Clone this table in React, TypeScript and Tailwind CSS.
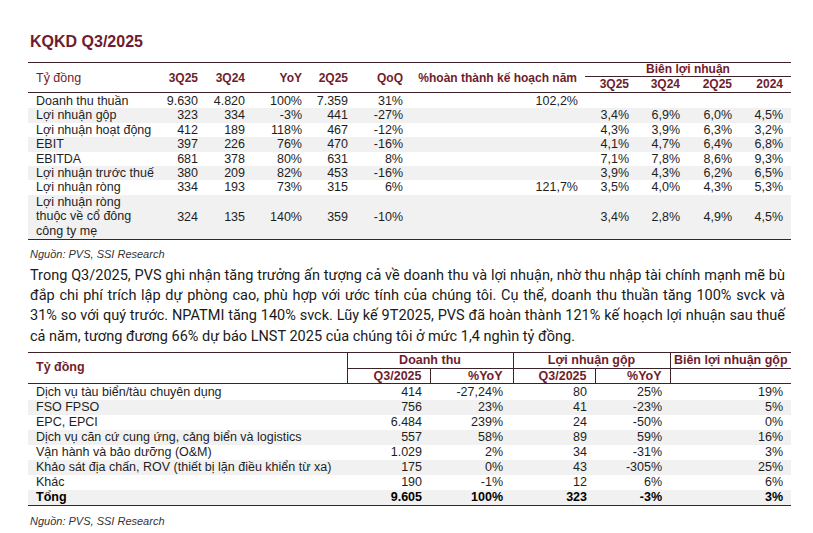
import React from "react";

const RED = "text-[#6f1d2d]";

const rows1 = [
  ["Doanh thu thuần", "9.630", "4.820", "100%", "7.359", "31%", "102,2%", "", "", "", ""],
  ["Lợi nhuận gộp", "323", "334", "-3%", "441", "-27%", "", "3,4%", "6,9%", "6,0%", "4,5%"],
  ["Lợi nhuận hoạt động", "412", "189", "118%", "467", "-12%", "", "4,3%", "3,9%", "6,3%", "3,2%"],
  ["EBIT", "397", "226", "76%", "470", "-16%", "", "4,1%", "4,7%", "6,4%", "6,8%"],
  ["EBITDA", "681", "378", "80%", "631", "8%", "", "7,1%", "7,8%", "8,6%", "9,3%"],
  ["Lợi nhuận trước thuế", "380", "209", "82%", "453", "-16%", "", "3,9%", "4,3%", "6,2%", "6,5%"],
  ["Lợi nhuận ròng", "334", "193", "73%", "315", "6%", "121,7%", "3,5%", "4,0%", "4,3%", "5,3%"],
];

const rows2 = [
  ["Dịch vụ tàu biển/tàu chuyên dụng", "414", "-27,24%", "80", "25%", "19%"],
  ["FSO FPSO", "756", "23%", "41", "-23%", "5%"],
  ["EPC, EPCI", "6.484", "239%", "24", "-50%", "0%"],
  ["Dịch vụ căn cứ cung ứng, cảng biển và logistics", "557", "58%", "89", "59%", "16%"],
  ["Vận hành và bảo dưỡng (O&M)", "1.029", "2%", "34", "-31%", "3%"],
  ["Khảo sát địa chấn, ROV (thiết bị lặn điều khiển từ xa)", "175", "0%", "43", "-305%", "25%"],
  ["Khác", "190", "-1%", "12", "6%", "6%"],
];

const paraLines = [
  "Trong Q3/2025, PVS ghi nhận tăng trưởng ấn tượng cả về doanh thu và lợi nhuận, nhờ thu nhập tài chính mạnh mẽ bù",
  "đắp chi phí trích lập dự phòng cao, phù hợp với ước tính của chúng tôi. Cụ thể, doanh thu thuần tăng 100% svck và",
  "31% so với quý trước. NPATMI tăng 140% svck. Lũy kế 9T2025, PVS đã hoàn thành 121% kế hoạch lợi nhuận sau thuế",
  "cả năm, tương đương 66% dự báo LNST 2025 của chúng tôi ở mức 1,4 nghìn tỷ đồng.",
];

const widths1 = [122, 48, 47, 57, 46, 55, 175, 51, 51, 52, 59];
const widths2 = [319, 83, 83, 82, 75, 121];

export default function App() {
  return (
    <div
      className="w-[813px] h-[533px] bg-white overflow-hidden px-[28px] pt-[32px] text-[#1e1e1e]"
      style={{ fontFamily: '"Liberation Sans", Arial, sans-serif' }}
    >
      <h1 className={`text-[16px] leading-[20px] font-bold ${RED} pl-[2px]`}>KQKD Q3/2025</h1>

      <table className="mt-[10px] w-[763px] table-fixed border-collapse text-[12.5px]">
        <colgroup>
          {widths1.map((w, i) => (
            <col key={i} style={{ width: w }} />
          ))}
        </colgroup>
        <thead className={`${RED} text-[12px]`}>
          <tr className="border-t border-[#3d2228] h-[14px]">
            <th rowSpan={2} className="text-left font-normal pl-[8px] text-[12.5px] leading-[14px]">Tỷ đồng</th>
            <th rowSpan={2} className="text-right font-bold leading-[14px]">3Q25</th>
            <th rowSpan={2} className="text-right font-bold leading-[14px]">3Q24</th>
            <th rowSpan={2} className="text-right font-bold leading-[14px]">YoY</th>
            <th rowSpan={2} className="text-right font-bold leading-[14px]">2Q25</th>
            <th rowSpan={2} className="text-right font-bold leading-[14px]">QoQ</th>
            <th rowSpan={2} className="text-right font-bold pr-[1px] leading-[14px]">%hoàn thành kế hoạch năm</th>
            <th colSpan={4} className="font-bold p-0 align-bottom">
              <div className="ml-[7px] border-b border-[#3d2228] text-center leading-[13px]">Biên lợi nhuận</div>
            </th>
          </tr>
          <tr className="border-b border-[#3d2228] h-[15px]">
            <th className="text-right font-bold leading-[15px]">3Q25</th>
            <th className="text-right font-bold leading-[15px]">3Q24</th>
            <th className="text-right font-bold leading-[15px]">2Q25</th>
            <th className="text-right font-bold leading-[15px] pr-[8px]">2024</th>
          </tr>
        </thead>
        <tbody className="leading-[14.4px]">
          {rows1.map((r, i) => (
            <tr key={i} className={i % 2 === 1 ? "bg-[#f1f1f1]" : ""}>
              {r.map((c, j) => (
                <td
                  key={j}
                  className={`${j === 0 ? "text-left pl-[8px] whitespace-nowrap" : "text-right"} ${j === 10 ? "pr-[8px]" : ""} ${i === 0 ? "pt-[1px]" : ""}`}
                >
                  {c}
                </td>
              ))}
            </tr>
          ))}
          <tr className="bg-[#f1f1f1] border-b border-[#3d2228]">
            <td className="text-left pl-[8px] leading-[14.6px]">
              Lợi nhuận ròng
              <br />
              thuộc về cổ đông
              <br />
              công ty mẹ
            </td>
            {["324", "135", "140%", "359", "-10%", "", "3,4%", "2,8%", "4,9%", "4,5%"].map((c, j) => (
              <td key={j} className={`text-right ${j === 9 ? "pr-[8px]" : ""}`}>
                {c}
              </td>
            ))}
          </tr>
        </tbody>
      </table>

      <p className="mt-[7px] pl-[2px] text-[11px] leading-[14px] italic text-[#333]">Nguồn: PVS, SSI Research</p>

      <div
        className="mt-[5px] text-[14.5px] leading-[20.3px] text-[#1a1a1a] pl-[2px]"
        style={{ fontFamily: 'Roboto, "Liberation Sans", sans-serif' }}
      >
        {paraLines.map((l, i) => (
          <div
            key={i}
            className={i < 3 ? "text-justify [text-align-last:justify] whitespace-nowrap" : "text-left whitespace-nowrap"}
          >
            {l}
          </div>
        ))}
      </div>

      <table className="mt-[5px] w-[763px] table-fixed border-collapse text-[12.5px]">
        <colgroup>
          {widths2.map((w, i) => (
            <col key={i} style={{ width: w }} />
          ))}
        </colgroup>
        <thead className={`${RED} text-[12.5px]`}>
          <tr className="border-t border-[#3d2228] h-[16px] leading-[15px]">
            <th rowSpan={2} className="text-left font-bold pl-[8px] border-r border-[#3d2228]">Tỷ đồng</th>
            <th colSpan={2} className="text-center font-bold border-b border-r border-[#3d2228]">Doanh thu</th>
            <th colSpan={2} className="text-center font-bold border-b border-r border-[#3d2228]">Lợi nhuận gộp</th>
            <th className="text-center font-bold border-b border-[#3d2228]">Biên lợi nhuận gộp</th>
          </tr>
          <tr className="border-b border-[#3d2228] h-[15px] leading-[14px]">
            <th className="text-right font-bold pr-[8px] border-r border-[#3d2228]">Q3/2025</th>
            <th className="text-right font-bold pr-[10px] border-r border-[#3d2228]">%YoY</th>
            <th className="text-right font-bold pr-[8px] border-r border-[#3d2228]">Q3/2025</th>
            <th className="text-right font-bold pr-[8px] border-r border-[#3d2228]">%YoY</th>
            <th></th>
          </tr>
        </thead>
        <tbody className="leading-[15px]">
          {rows2.map((r, i) => (
            <tr key={i} className={i % 2 === 1 ? "bg-[#f1f1f1]" : ""}>
              {r.map((c, j) => (
                <td
                  key={j}
                  className={`${j === 0 ? "text-left pl-[8px] whitespace-nowrap" : "text-right"} ${j === 2 ? "pr-[10px]" : j > 0 ? "pr-[8px]" : ""} ${i === 0 ? "pt-[1px]" : ""}`}
                >
                  {c}
                </td>
              ))}
            </tr>
          ))}
          <tr className="bg-[#f1f1f1] border-b border-[#3d2228] font-bold text-black">
            {["Tổng", "9.605", "100%", "323", "-3%", "3%"].map((c, j) => (
              <td
                key={j}
                className={`${j === 0 ? "text-left pl-[8px]" : "text-right"} ${j === 2 ? "pr-[10px]" : j > 0 ? "pr-[8px]" : ""}`}
              >
                {c}
              </td>
            ))}
          </tr>
        </tbody>
      </table>

      <p className="mt-[8px] pl-[2px] text-[11px] leading-[14px] italic text-[#333]">Nguồn: PVS, SSI Research</p>
    </div>
  );
}
